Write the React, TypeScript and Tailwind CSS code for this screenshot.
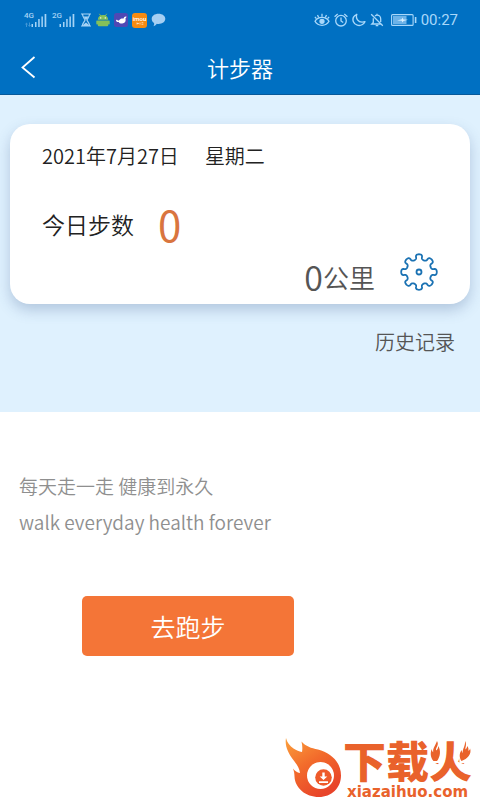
/* =========================================================
   STATUS BAR ICONS
========================================================= */

function Signal({ label, arrows }: { label: string; arrows?: boolean }) {
  return (
    <div className="relative w-6 h-4 text-[#a5d3f5]">
      <span className="absolute left-0 top-0 font-['Roboto'] font-medium text-[8px] leading-[8px]">
        {label}
      </span>

      <svg viewBox="0 0 24 16" className="w-6 h-4" fill="currentColor">
        {arrows && (
          <path
            d="M1 12.500l1.500-2 1.500 2H3v2.500H2v-2.500zM5 10.500h1v2.500h1L5.500 15 4 13h1z"
            opacity="0.4"
          />
        )}
        <rect x="7.500" y="12" width="1.500" height="3" />
        <rect x="11" y="10" width="1.500" height="5" />
        <rect x="14.200" y="7" width="1.500" height="8" />
        <rect x="17.400" y="4.500" width="1.500" height="10.500" />
        <rect x="20.600" y="2" width="1.700" height="13" />
      </svg>
    </div>
  );
}

function Hourglass() {
  return (
    <svg viewBox="0 0 12 14" className="w-3 h-[14px]" fill="none">
      <path
        d="M1 1h10M1 13h10M2.500 1c0 3.500 2.500 4.500 2.500 6s-2.500 2.500-2.500 6M9.500 1c0 3.500-2.500 4.500-2.500 6s2.500 2.500 2.500 6"
        stroke="#a5d3f5"
        strokeWidth="1.200"
      />
      <path d="M3.500 3.500h5L6 7zM3 13c0-2 2-2.500 3-3.500 1 1 3 1.500 3 3.500z" fill="#a5d3f5" />
    </svg>
  );
}

function Android() {
  return (
    <svg viewBox="0 0 14 14" className="w-[14px] h-[14px]">
      <path d="M3.300.8l1.500 2.200M10.700.8L9.200 3" stroke="#84c05a" strokeWidth="0.900" />
      <path
        d="M1.800 6.800C1.900 4 4 2 7 2s5.100 2 5.200 4.800zM1.800 7.400h10.400v4.800a1 1 0 0 1-1 1H2.800a1 1 0 0 1-1-1z"
        fill="#84c05a"
      />
      <rect x="0.300" y="7.400" width="1.700" height="4" rx="0.600" fill="#84c05a" />
      <rect x="12" y="7.400" width="1.700" height="4" rx="0.600" fill="#84c05a" />
      <circle cx="4.700" cy="4.900" r="0.700" fill="#fff" />
      <circle cx="9.300" cy="4.900" r="0.700" fill="#fff" />
    </svg>
  );
}

function WhaleApp() {
  return (
    <svg viewBox="0 0 14 14" className="w-[14px] h-[14px]">
      <rect width="14" height="14" rx="2.500" fill="#4f48b4" />
      <path
        d="M2 7.300c.8-.9 1.600-.4 2 .5.600-.1 1.100-.500 1.600-1C6.600 5.700 8 5.200 9.600 5.600c.3-1.700 1.400-2.500 2.900-2.100-.1.900-.5 1.500-1.100 2 .9 2.600-.6 4.900-3.200 5-1.800.1-2.900-.500-3.500-1.600-1.200.5-2.500.1-2.700-1.600z"
        fill="#fff"
      />
    </svg>
  );
}

function ImouApp() {
  return (
    <span className="flex flex-col items-center justify-center w-[15px] h-[15px] rounded-[3px] bg-[#f68b11] text-white font-['Roboto']">
      <span className="text-[6px] leading-[6px] font-medium">imou</span>
      <svg viewBox="0 0 8 3" className="w-2 h-[3px]">
        <path d="M1 .5v2M1 1.500h2M4 .5v2M5.500 .7h1.800M5.500 2.300h1.800" stroke="#fff" strokeWidth="0.600" />
      </svg>
    </span>
  );
}

function Bubble() {
  return (
    <svg viewBox="0 0 15 14" className="w-[15px] h-[14px]">
      <path
        d="M7.500.8c3.900 0 6.800 2.200 6.800 5s-2.900 5.200-6.800 5.200c-.6 0-1.200-.1-1.700-.2-.7 1-1.700 2-3.300 2.500.6-1 .8-2 .6-3.200C1.500 9.200.7 7.600.7 5.800c0-2.800 2.900-5 6.800-5z"
        fill="#a5cff3"
      />
    </svg>
  );
}

function StatusIcons() {
  return (
    <div className="flex items-center gap-1 text-[#a9d8fa]">
      <svg viewBox="0 0 16 14" className="w-4 h-[14px]" fill="none" stroke="currentColor" strokeWidth="1.300">
        <path d="M1 8.300C2.600 5.600 5 4.400 8 4.400s5.400 1.200 7 3.900c-1.600 2.800-4 4-7 4s-5.400-1.200-7-4z" />
        <path d="M8 .8v3M3.500 2l1.200 2.600M12.500 2l-1.200 2.600M.9 3.800l1.500 1.900M15.100 3.800l-1.500 1.900" />
        <circle cx="8" cy="8.300" r="2" fill="currentColor" />
      </svg>

      <svg viewBox="0 0 14 14" className="w-[14px] h-[14px]" fill="none" stroke="currentColor" strokeWidth="1.300">
        <circle cx="7" cy="7.700" r="5.300" />
        <path d="M7 4.500v3.400l2.200 1.700M.6 3.700L3.700.9M13.400 3.700L10.300.9" />
      </svg>

      <svg viewBox="0 0 14 14" className="w-[14px] h-[14px]" fill="none" stroke="currentColor" strokeWidth="1.400">
        <path
          d="M4.800 1.300C1.500 2.600.2 5.800 1.400 8.700c1.500 3.600 5.800 4.800 9 2.800 1.200-.7 2-1.600 2.500-2.800-3 .9-5.900.2-7.400-1.900-1.200-1.700-1.400-3.700-.7-5.500z"
          strokeLinejoin="round"
        />
      </svg>

      <svg viewBox="0 0 14 14" className="w-[14px] h-[14px]" fill="none" stroke="currentColor" strokeWidth="1.300">
        <path d="M3.300 5.200v4.300L1.800 11h9M5 2.900c.5-.4 1.200-.7 2-.7 2.200 0 3.700 1.600 3.700 3.900v3M7 .8v1.400M5.700 12.700h2.600M1.200 1.200l11.600 11.600" />
      </svg>

      <svg viewBox="0 0 26 12" className="w-[26px] h-3 ml-[3px]" fill="none">
        <rect x="0.600" y="0.600" width="21.500" height="10.800" rx="1" stroke="currentColor" strokeWidth="1.100" />
        <rect x="2" y="2" width="13.500" height="8" fill="#6db3e8" />
        <path d="M6 6.400l4.800-1.200.6-1.700 1 1.900 4.600.4-4.600 1.100-.7 1.700-1.100-1.900z" fill="#d9f0ff" />
        <rect x="23.800" y="3" width="1.600" height="6" fill="currentColor" />
      </svg>

      <span className="font-['Roboto'] font-normal text-[15px] leading-5">00:27</span>
    </div>
  );
}

/* =========================================================
   GEAR
========================================================= */

function Gear() {
  // eight soft lobes around the centre
  const points = Array.from({ length: 240 }, (_, i) => {
    const a = (i / 240) * Math.PI * 2;
    const r = 15.2 + 2.600 * Math.cos(8 * a);
    const t = a + 0.06 * Math.sin(16 * a);
    return `${(20 + r * Math.cos(t)).toFixed(2)} ${(20 + r * Math.sin(t)).toFixed(2)}`;
  });

  return (
    <svg viewBox="0 0 40 40" className="w-10 h-10" fill="none" stroke="#1b72b3">
      <path d={`M${points.join("L")}Z`} strokeWidth="1.800" strokeLinejoin="round" />
      <circle cx="20" cy="20" r="2.500" strokeWidth="1.800" />
    </svg>
  );
}

/* =========================================================
   DOWNLOAD SITE BADGE
========================================================= */

function FlameLogo() {
  return (
    <svg viewBox="0 0 58 62" className="w-[58px] h-[62px]">
      <defs>
        <linearGradient id="flame" x1="0" y1="0" x2="0.600" y2="1">
          <stop offset="0" stopColor="#fba03c" />
          <stop offset="0.500" stopColor="#f26a2b" />
          <stop offset="1" stopColor="#e8442a" />
        </linearGradient>
      </defs>
      <path
        d="M1 0c1 4.500 4 8 7.500 10.500 3 2 5.500 2.800 8.500 3.500.5-3 .5-6-.5-10.500 4.500 5 9.500 6.500 16.500 8C46 15 56 24 56 37.500 56 50 46.500 59 34 59 20.500 59 10 50 9.500 38.500c-.1-3-.5-5.500-1.500-8 2 2.500 4 4 7 4.500-.5-5.500-3.500-8.500-7-13.500C3.500 15.500-.500 8 1 0z"
        fill="url(#flame)"
      />
      <circle cx="35.500" cy="37.500" r="13.500" fill="#fff" />
      <circle cx="38.500" cy="39.500" r="8.300" fill="#ee5a2a" />
      <path d="M37.300 34.500h2.400v4h2.600l-3.800 3.500-3.800-3.500h2.600zM34 43.300h9v1.700h-9z" fill="#fff" />
    </svg>
  );
}

function SiteBadge() {
  return (
    <a href="#" className="flex items-start text-[#e9622b]">
      <FlameLogo />

      <span className="flex flex-col gap-1 pr-2">
        <span className="relative self-start font-['Noto_Sans_CJK_SC',sans-serif] font-black text-[43px] leading-[42px] whitespace-nowrap">
          下载火

          {/* Flames in place of the side strokes */}
          <svg viewBox="0 0 44 40" className="absolute right-0 top-0 w-11 h-10">
            <path d="M0 0h15v25H0zM29.500 0H44v25H31.500z" fill="#fff" />
            <path
              d="M9 3c2.500 4-1.500 6.500-1 9.500 1.500-1 2.200-2.500 2.200-4.500 3 4.500 2 11-1.200 15H5.500C2.500 19.500 2 15 3.800 11c.2 1.700.6 2.500 1.400 3.200C4.700 10 7.500 7.500 9 3zM37 3c2.200 3.500 0 6 .5 8.500 1-.8 1.600-2 1.600-3.500 1.600 1.500 1.400 3.200 1.300 4.800.9-.4 1.400-1.200 1.700-2.300 1.800 5.500-2.600 10.500-8.600 12.500-2.500-3.500-2.300-8 .2-11 .1 1.400.4 2.300 1 3C34.300 11 37.500 8 37 3z"
              fill="#e9622b"
            />
          </svg>
        </span>

        <span className="pl-1 font-['DejaVu_Sans'] font-bold text-[15px] leading-4">
          xiazaihuo.com
        </span>
      </span>
    </a>
  );
}

/* =========================================================
   PEDOMETER PAGE
========================================================= */

export default function App() {
  return (
    <div className="min-h-screen flex flex-col bg-white font-['Noto_Sans_CJK_SC',sans-serif] font-[350]" lang="zh-CN">

      {/* Header */}
      <header className="bg-[#0070c2] border-b border-[#07599a]">

        <div className="flex items-center justify-between h-10 pl-6 pr-[22px]">
          <div className="flex items-center gap-1">
            <Signal label="4G" arrows />
            <Signal label="2G" />
            <span className="flex items-center gap-1">
              <Hourglass />
              <Android />
              <WhaleApp />
              <ImouApp />
              <Bubble />
            </span>
          </div>

          <StatusIcons />
        </div>

        <div className="grid grid-cols-[56px_1fr_56px] items-center h-[54px]">
          <button type="button" aria-label="返回" className="flex h-full items-center pl-5">
            <svg viewBox="0 0 16 24" className="w-4 h-6" fill="none" stroke="#fff" strokeWidth="1.800">
              <path d="M14.500 2L2.500 12.500 14.500 22.500" />
            </svg>
          </button>

          <h1 className="text-center text-[22px] leading-8 text-white">计步器</h1>
        </div>

      </header>

      {/* Today */}
      <section className="px-[10px] pt-[29px] pb-[54px] bg-[#dff1fe]">

        <div className="h-[180px] px-8 pt-4 rounded-[20px] bg-white shadow-[0_6px_14px_rgba(60,90,140,0.28)]">

          <div className="flex gap-[26px] text-[20px] leading-8 text-[#222]">
            <span>2021年7月27日</span>
            <span>星期二</span>
          </div>

          <div className="flex items-center gap-6 pt-5 leading-16">
            <span className="text-[23px] text-[#222]">今日步数</span>
            <span className="font-normal text-[42px] text-[#d9753f]">0</span>
          </div>

          <div className="flex items-start justify-end gap-6 -mt-1 -mr-px leading-[50px] text-[#555]">
            <span className="flex">
              <span className="text-[34px]">0</span>
              <span className="text-[26px]">公里</span>
            </span>

            <button type="button" aria-label="设置">
              <Gear />
            </button>
          </div>

        </div>

        <div className="flex justify-end pt-[22px] pr-[15px]">
          <a href="#" className="text-[20px] leading-8 text-[#555]">历史记录</a>
        </div>

      </section>

      {/* Slogan */}
      <section className="px-[19px] pt-14 text-[19px] leading-9 text-[#8f8f8f]">
        <p>每天走一走 健康到永久</p>
        <p>walk everyday health forever</p>
      </section>

      <div className="pl-[82px] pt-14">
        <button
          type="button"
          className="w-[212px] h-[60px] rounded-[5px] bg-[#f47537] text-[25px] leading-8 text-white"
        >
          去跑步
        </button>
      </div>

      <footer className="flex justify-end mt-auto">
        <SiteBadge />
      </footer>

    </div>
  );
}
